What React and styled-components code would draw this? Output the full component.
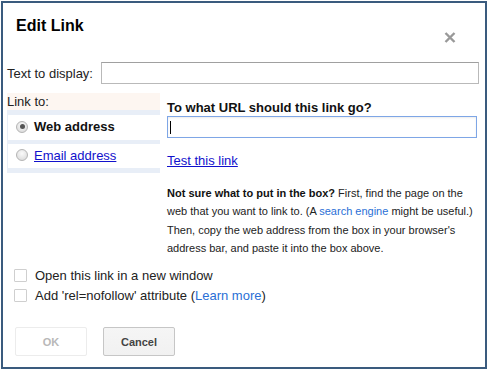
import React from "react";
import styled, { createGlobalStyle } from "styled-components";

const Global = createGlobalStyle`
  html, body {
    margin: 0;
    padding: 0;
    background: #fff;
  }
  body {
    font-family: "Liberation Sans", Arial, sans-serif;
    color: #222;
  }
`;

const Dialog = styled.div`
  box-sizing: border-box;
  width: 486px;
  margin: 1px 0 0 1px;
  border: 2px solid #3a5b7e;
  background: #fff;
  display: flex;
  flex-direction: column;
  padding-bottom: 11px;
`;

const TitleBar = styled.div`
  height: 52px;
  box-sizing: border-box;
  padding: 13px 29px 0 13px;
  display: flex;
  justify-content: space-between;
  align-items: flex-start;
`;

const Title = styled.div`
  font-size: 16px;
  font-weight: bold;
  color: #000;
  line-height: 19px;
`;

const Close = styled.button`
  border: none;
  background: none;
  padding: 0;
  margin-top: 16px;
  width: 12px;
  height: 11px;
  display: flex;
  cursor: pointer;
`;

const TextRow = styled.div`
  display: flex;
  align-items: center;
  margin-top: 7px;
  padding: 0 6px 0 4px;
`;

const Label = styled.label`
  font-size: 13px;
  flex: none;
`;

const TextInput = styled.input`
  box-sizing: border-box;
  width: ${(p) => p.$width}px;
  height: 22px;
  margin-left: auto;
  border: 1px solid #b9b9b9;
  border-top-color: #a0a0a0;
  outline: none;
  font: 13px "Liberation Sans", Arial, sans-serif;
  padding: 0 3px;
`;

const LinkArea = styled.div`
  display: flex;
  align-items: flex-start;
  margin-top: 9px;
  padding-left: 4px;
`;

const LeftPanel = styled.div`
  width: 153px;
  flex: none;
`;

const LinkToHeader = styled.div`
  height: 17px;
  line-height: 17px;
  font-size: 13px;
  background: #fdf6f1;
`;

const Options = styled.div`
  background: #e8eef7;
  padding: 5px 0 5px 1px;
  display: flex;
  flex-direction: column;
  gap: 4px;
`;

const Option = styled.div`
  height: ${(p) => p.$h}px;
  box-sizing: border-box;
  background: #fff;
  display: flex;
  align-items: center;
  gap: 6px;
  padding: 0 0 2px 8px;
  font-size: 13px;
  font-weight: ${(p) => (p.$active ? "bold" : "normal")};
  color: #111;
`;

const Radio = styled.span`
  width: 12px;
  height: 12px;
  box-sizing: border-box;
  border-radius: 50%;
  border: 1px solid #b4b4b4;
  background: radial-gradient(circle at 50% 35%, #fafafa, #d6d6d6);
  display: flex;
  align-items: center;
  justify-content: center;

  &::after {
    content: "";
    width: 5px;
    height: 5px;
    border-radius: 50%;
    background: ${(p) => (p.$checked ? "#555" : "transparent")};
  }
`;

const Link = styled.a`
  color: #1111cc;
  text-decoration: underline;
  font-size: 13px;
  cursor: pointer;
`;

const RightPanel = styled.div`
  margin-left: 7px;
  width: 310px;
  padding-top: 7px;
`;

const Heading = styled.div`
  font-size: 13px;
  font-weight: bold;
  line-height: 15px;
  color: #111;
`;

const UrlWrap = styled.div`
  position: relative;
  margin-top: 1px;

  &::after {
    content: "";
    position: absolute;
    left: 3px;
    top: 5px;
    width: 1px;
    height: 13px;
    background: #000;
  }
`;

const UrlInput = styled.input`
  box-sizing: border-box;
  width: 310px;
  height: 22px;
  border: 1px solid #7ea6e6;
  box-shadow: inset 0 1px 2px rgba(0, 0, 0, 0.08);
  outline: none;
  font: 13px "Liberation Sans", Arial, sans-serif;
  padding: 0 3px;
  display: block;
`;

const TestRow = styled.div`
  margin-top: 14px;
  line-height: 15px;
`;

const Help = styled.p`
  margin: 16px 0 0;
  font-size: 11px;
  line-height: 18.3px;
  color: #222;

  b {
    color: #111;
  }
`;

const SoftLink = styled.a`
  color: #2a6fd6;
  text-decoration: none;
  cursor: pointer;
`;

const Checks = styled.div`
  margin-top: 8px;
  padding-left: 11px;
  display: flex;
  flex-direction: column;
`;

const CheckRow = styled.label`
  height: 20px;
  display: flex;
  align-items: center;
  gap: 8px;
  font-size: 13px;
  color: #222;
`;

const Box = styled.span`
  width: 13px;
  height: 13px;
  box-sizing: border-box;
  border: 1px solid #cfcfcf;
  border-radius: 1px;
  background: #fff;
`;

const Buttons = styled.div`
  margin-top: 22px;
  padding-left: 12px;
  display: flex;
  gap: 16px;
`;

const Button = styled.button`
  width: 72px;
  height: 29px;
  box-sizing: border-box;
  font: bold 11px "Liberation Sans", Arial, sans-serif;
  border-radius: 2px;
  color: ${(p) => (p.disabled ? "#b8b8b8" : "#444")};
  background: ${(p) =>
    p.disabled ? "#fff" : "linear-gradient(#f5f5f5, #f1f1f1)"};
  border: 1px solid ${(p) => (p.disabled ? "#ececec" : "#c6c6c6")};
  padding: 0;
`;

export default function App() {
  return (
    <>
      <Global />
      <Dialog>
        <TitleBar>
          <Title>Edit Link</Title>
          <Close aria-label="Close">
            <svg width="12" height="11" viewBox="0 0 12 11">
              <path d="M1.5 1 L10.5 10 M10.5 1 L1.5 10" stroke="#999" strokeWidth="2.4" />
            </svg>
          </Close>
        </TitleBar>

        <TextRow>
          <Label>Text to display:</Label>
          <TextInput $width={378} />
        </TextRow>

        <LinkArea>
          <LeftPanel>
            <LinkToHeader>Link to:</LinkToHeader>
            <Options>
              <Option $h={25} $active>
                <Radio $checked />
                Web address
              </Option>
              <Option $h={24}>
                <Radio />
                <Link>Email address</Link>
              </Option>
            </Options>
          </LeftPanel>

          <RightPanel>
            <Heading>To what URL should this link go?</Heading>
            <UrlWrap>
              <UrlInput />
            </UrlWrap>
            <TestRow>
              <Link>Test this link</Link>
            </TestRow>
            <Help>
              <b>Not sure what to put in the box?</b> First, find the page on the
              web that you want to link to. (A <SoftLink>search engine</SoftLink>{" "}
              might be useful.) Then, copy the web address from the box in your
              browser's address bar, and paste it into the box above.
            </Help>
          </RightPanel>
        </LinkArea>

        <Checks>
          <CheckRow>
            <Box />
            Open this link in a new window
          </CheckRow>
          <CheckRow>
            <Box />
            <span>
              Add 'rel=nofollow' attribute (<SoftLink>Learn more</SoftLink>)
            </span>
          </CheckRow>
        </Checks>

        <Buttons>
          <Button disabled>OK</Button>
          <Button>Cancel</Button>
        </Buttons>
      </Dialog>
    </>
  );
}
